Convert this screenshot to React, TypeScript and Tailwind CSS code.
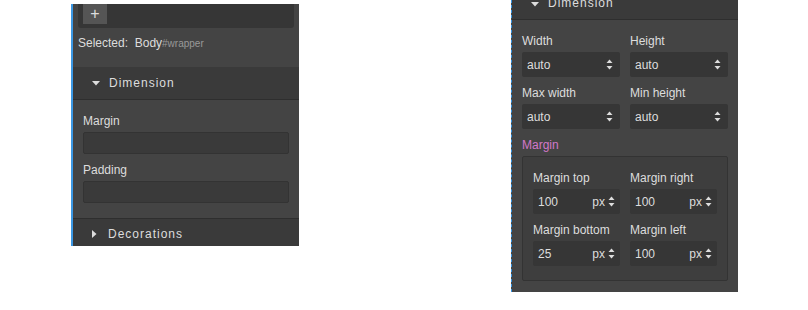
import React from "react";

const font = { fontFamily: '"Liberation Sans", Arial, sans-serif' };

function Arrows() {
  return (
    <svg width="7" height="11" viewBox="0 0 7 11" className="shrink-0">
      <path d="M3.5 0.5 L6.5 4 L0.5 4 Z" fill="#ddd" />
      <path d="M3.5 10.5 L6.5 7 L0.5 7 Z" fill="#ddd" />
    </svg>
  );
}

function SelectBox({ value }: { value: string }) {
  return (
    <div className="flex h-[25px] items-center justify-between rounded-[2px] bg-[#363636] pl-[5px] pr-[7px] text-[12px] text-[#ddd]">
      <span>{value}</span>
      <Arrows />
    </div>
  );
}

function Field({ label, value }: { label: string; value: string }) {
  return (
    <div className="flex flex-col">
      <div className="mb-[2px] h-[18px] text-[12px] leading-[18px] text-[#ddd]">{label}</div>
      <SelectBox value={value} />
    </div>
  );
}

function UnitBox({ value }: { value: string }) {
  return (
    <div className="flex h-[25px] items-center rounded-[2px] bg-[#363636] pl-[5px] pr-[5px] text-[12px] text-[#ddd]">
      <span className="flex-1">{value}</span>
      <span className="mr-[3px]">px</span>
      <Arrows />
    </div>
  );
}

function UnitField({ label, value }: { label: string; value: string }) {
  return (
    <div className="flex flex-col">
      <div className="mb-[2px] h-[18px] text-[12px] leading-[18px] text-[#ddd]">{label}</div>
      <UnitBox value={value} />
    </div>
  );
}

function Caret({ down }: { down: boolean }) {
  return down ? (
    <svg width="8" height="5" viewBox="0 0 8 5">
      <path d="M0 0 L8 0 L4 4.5 Z" fill="#ddd" />
    </svg>
  ) : (
    <svg width="5" height="8" viewBox="0 0 5 8">
      <path d="M0 0 L4.5 4 L0 8 Z" fill="#ddd" />
    </svg>
  );
}

export default function App() {
  return (
    <div className="relative h-[310px] w-[808px] bg-white" style={font}>
      <div className="flex items-start">
        {/* Left panel */}
        <div className="ml-[71px] mt-[4px] flex h-[242px] w-[228px] flex-col overflow-hidden border-l-2 border-[#3b97e3] bg-[#444]">
          <div className="mx-[5px] flex h-[24px] shrink-0 rounded-b-[3px] bg-[#363636] pl-[5px]">
            <div className="flex h-[20px] w-[24px] items-center justify-center bg-[#555] text-[16px] leading-none text-[#ddd]">
              +
            </div>
          </div>
          <div className="ml-[5px] mt-[8px] h-[14px] shrink-0 text-[12px] leading-[14px] text-[#ddd]">
            Selected:&nbsp; Body<span className="text-[10px] text-[#999]">#wrapper</span>
          </div>
          <div className="mt-[17px] flex h-[33px] shrink-0 items-center border-b border-[#2e2e2e] bg-[#3a3a3a] pl-[19px] text-[12px] tracking-[1px] text-[#ddd]">
            <Caret down />
            <span className="ml-[9px]">Dimension</span>
          </div>
          <div className="flex shrink-0 flex-col px-[10px] pt-[13px]">
            <div className="h-[16px] text-[12px] leading-[16px] text-[#ddd]">Margin</div>
            <div className="mt-[3px] h-[22px] rounded-[2px] border border-[#333] bg-[#3a3a3a]" />
            <div className="mt-[8px] h-[16px] text-[12px] leading-[16px] text-[#ddd]">Padding</div>
            <div className="mt-[3px] h-[22px] rounded-[2px] border border-[#333] bg-[#3a3a3a]" />
          </div>
          <div className="mt-[15px] flex flex-1 items-center border-t border-[#2e2e2e] bg-[#3a3a3a] pl-[19px] pt-[3px] text-[12px] tracking-[1px] text-[#ddd]">
            <Caret down={false} />
            <span className="ml-[11px]">Decorations</span>
          </div>
        </div>

        {/* Right panel */}
        <div className="ml-[212px] flex h-[292px] w-[227px] flex-col border-l border-dashed border-[#3b97e3] bg-[#444]">
          <div className="flex h-[20px] shrink-0 items-end border-b border-[#2e2e2e] bg-[#3a3a3a] pb-[10px] pl-[19px] text-[12px] tracking-[1px] text-[#ddd]">
            <span className="mb-[2px]">
              <Caret down />
            </span>
            <span className="ml-[9px] leading-[12px]">Dimension</span>
          </div>
          <div className="flex flex-col px-[10px] pt-[12px]">
            <div className="grid grid-cols-2 gap-x-[10px] gap-y-[7px]">
              <Field label="Width" value="auto" />
              <Field label="Height" value="auto" />
              <Field label="Max width" value="auto" />
              <Field label="Min height" value="auto" />
            </div>
            <div className="mt-[6px] h-[20px] text-[12px] leading-[20px] text-[#d278c9]">Margin</div>
            <div className="mt-[1px] h-[125px] rounded-[2px] border border-[#333] bg-[#3e3e3e] px-[10px] pt-[12px]">
              <div className="grid grid-cols-2 gap-x-[10px] gap-y-[7px]">
                <UnitField label="Margin top" value="100" />
                <UnitField label="Margin right" value="100" />
                <UnitField label="Margin bottom" value="25" />
                <UnitField label="Margin left" value="100" />
              </div>
            </div>
          </div>
        </div>
      </div>
    </div>
  );
}
